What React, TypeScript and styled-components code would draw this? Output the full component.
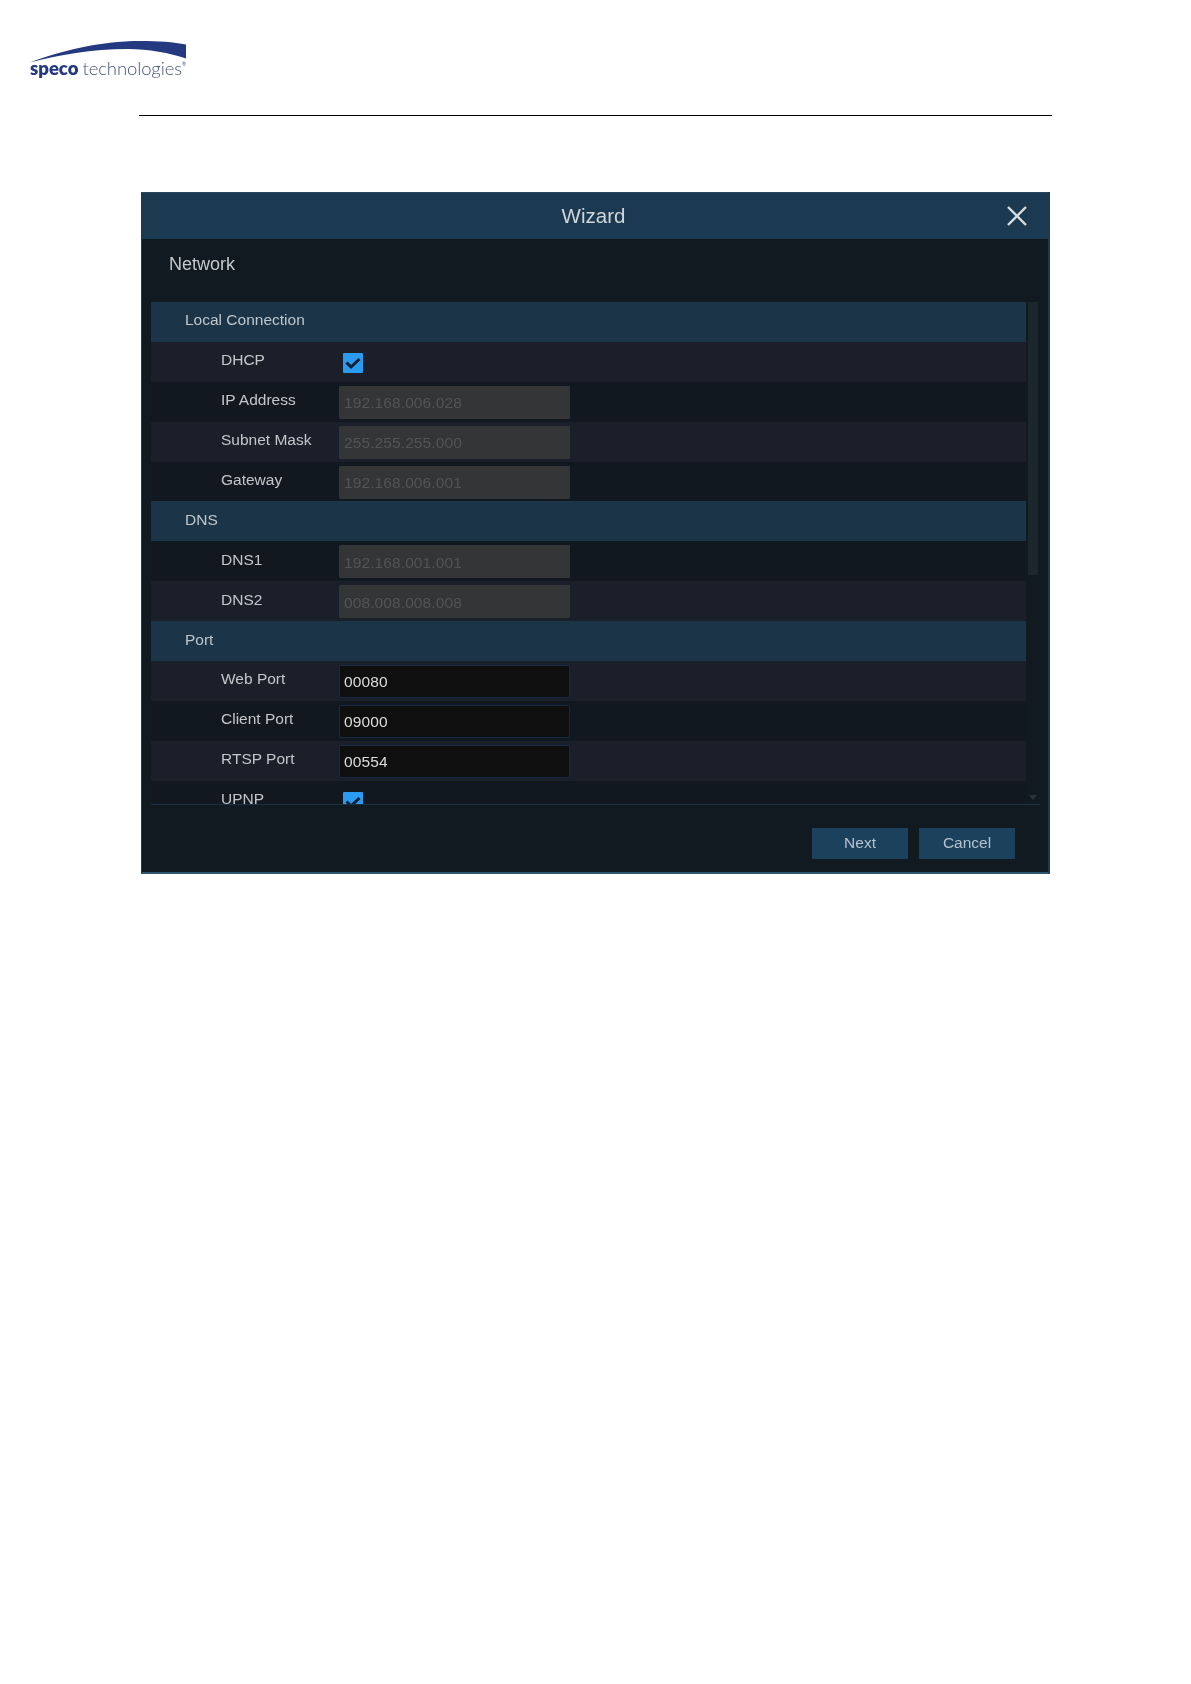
import React from "react";
import styled, { createGlobalStyle } from "styled-components";

const Global = createGlobalStyle`
  html, body { margin: 0; padding: 0; background: #fff; }
  body { font-family: "Liberation Sans", Arial, sans-serif; }
`;

const Page = styled.div`
  width: 1191px;
  height: 1684px;
  display: flex;
  flex-direction: column;
  overflow: hidden;
`;

const Logo = styled.div`
  margin: 41px 0 0 30px;
  width: 160px;
  height: 38px;
  display: flex;
  flex-direction: column;
  filter: blur(0.4px);
`;

const LogoArc = styled.svg`
  width: 157px;
  height: 23px;
  flex: none;
`;

const LogoWords = styled.div`
  display: flex;
  align-items: baseline;
  margin-top: -5px;
  line-height: 18px;
  font-family: "Lato", sans-serif;
  color: #46547f;
  white-space: nowrap;
`;

const LogoBold = styled.span`
  font-size: 18.5px;
  font-weight: 800;
  color: #24397f;
  margin-right: 4px;
`;

const LogoLight = styled.span`
  font-size: 18.5px;
  font-weight: 300;
  letter-spacing: -0.1px;
`;

const LogoMark = styled.span`
  font-size: 5px;
  line-height: 5px;
  align-self: flex-start;
  margin-top: 3px;
`;

const Rule = styled.hr`
  margin: 36px 0 0 139px;
  width: 913px;
  height: 1px;
  border: 0;
  background: #000;
  flex: none;
`;

const Window = styled.section`
  box-sizing: border-box;
  margin: 76px 0 0 141px;
  width: 909px;
  height: 682px;
  background: #121a21;
  border-left: 1px solid #1d3a50;
  border-right: 2px solid #1d3a50;
  border-bottom: 2px solid #31566f;
  display: flex;
  flex-direction: column;
  filter: blur(0.5px);
`;

const TitleBar = styled.header`
  position: relative;
  height: 47px;
  flex: none;
  background: #1b3a52;
  border-top: 1px solid #2b4a60;
  box-sizing: border-box;
  display: flex;
  align-items: center;
  justify-content: center;
  padding-right: 3px;
  font-size: 20.5px;
  color: #d0d5d8;
`;

const Close = styled.svg`
  position: absolute;
  right: 20px;
  top: 12px;
  width: 22px;
  height: 22px;
`;

const Heading = styled.h2`
  margin: 0;
  height: 63px;
  flex: none;
  box-sizing: border-box;
  padding: 15px 0 0 27px;
  font-size: 18px;
  line-height: 20px;
  font-weight: 400;
  color: #c4c9cc;
`;

const TableFrame = styled.div`
  margin-left: 9px;
  width: 889px;
  height: 503px;
  flex: none;
  display: flex;
  box-sizing: border-box;
  border-bottom: 1px solid #1b3145;
  overflow: hidden;
`;

const Rows = styled.div`
  width: 875px;
  flex: none;
  display: flex;
  flex-direction: column;
`;

const Section = styled.div`
  height: 39.9px;
  flex: none;
  box-sizing: border-box;
  background: #1b3448;
  padding: 0 0 3px 34px;
  display: flex;
  align-items: center;
  font-size: 15.5px;
  color: #c0c6ca;
`;

const Row = styled.div<{ $light?: boolean }>`
  height: 39.9px;
  flex: none;
  box-sizing: border-box;
  background: ${(p) => (p.$light ? "#1a1f2a" : "#11181f")};
  padding: 0 0 0 70px;
  display: flex;
  align-items: center;
`;

const Label = styled.span`
  width: 118px;
  flex: none;
  font-size: 15.5px;
  color: #c3c7cb;
  margin-top: -3px;
`;

const Field = styled.div<{ $disabled?: boolean }>`
  width: 231px;
  height: 33px;
  margin-top: 1px;
  box-sizing: border-box;
  padding: 2px 0 0 4px;
  display: flex;
  align-items: center;
  font-size: 15.5px;
  letter-spacing: 0.1px;
  background: ${(p) => (p.$disabled ? "#343537" : "#0f0f10")};
  color: ${(p) => (p.$disabled ? "#525355" : "#dcdcdc")};
  border: 1px solid ${(p) => (p.$disabled ? "#343537" : "#132b44")};
  border-radius: 1px;
`;

const Check = styled.svg`
  width: 20px;
  height: 20px;
  margin: 2px 0 0 4px;
  flex: none;
`;

const ScrollTrack = styled.div`
  width: 14px;
  flex: none;
  background: #121a21;
  position: relative;
`;

const ScrollThumb = styled.div`
  margin-left: 2px;
  width: 10px;
  height: 273px;
  background: #1c262d;
`;

const ScrollArrow = styled.div`
  position: absolute;
  left: 3px;
  bottom: 4px;
  width: 0;
  height: 0;
  border-left: 4px solid transparent;
  border-right: 4px solid transparent;
  border-top: 5px solid #26343d;
`;

const Footer = styled.footer`
  flex: 1;
  display: flex;
  justify-content: flex-end;
  gap: 11px;
  padding: 23px 33px 0 0;
`;

const Button = styled.button`
  width: 96px;
  height: 31px;
  border: 0;
  padding: 0 0 2px;
  background: #1c415d;
  color: #b4c2cc;
  font-family: "Liberation Sans", Arial, sans-serif;
  font-size: 15.5px;
`;

const CheckBox = () => (
  <Check viewBox="0 0 20 20">
    <rect width="20" height="20" rx="1" fill="#2b9bf2" />
    <path d="M3.5 9.5l4.5 4.5 8.5-8" fill="none" stroke="#0f2030" strokeWidth="3" />
  </Check>
);

type Item =
  | { kind: "section"; label: string }
  | { kind: "check"; label: string; light: boolean }
  | { kind: "field"; label: string; value: string; light: boolean; disabled: boolean };

const items: Item[] = [
  { kind: "section", label: "Local Connection" },
  { kind: "check", label: "DHCP", light: true },
  { kind: "field", label: "IP Address", value: "192.168.006.028", light: false, disabled: true },
  { kind: "field", label: "Subnet Mask", value: "255.255.255.000", light: true, disabled: true },
  { kind: "field", label: "Gateway", value: "192.168.006.001", light: false, disabled: true },
  { kind: "section", label: "DNS" },
  { kind: "field", label: "DNS1", value: "192.168.001.001", light: false, disabled: true },
  { kind: "field", label: "DNS2", value: "008.008.008.008", light: true, disabled: true },
  { kind: "section", label: "Port" },
  { kind: "field", label: "Web Port", value: "00080", light: true, disabled: false },
  { kind: "field", label: "Client Port", value: "09000", light: false, disabled: false },
  { kind: "field", label: "RTSP Port", value: "00554", light: true, disabled: false },
  { kind: "check", label: "UPNP", light: false },
];

export default function App() {
  return (
    <Page>
      <Global />
      <Logo>
        <LogoArc viewBox="0 0 157 23">
          <path d="M0 21.5C30 10 70 0 110 0C128 0 144 1 156 3.5V17.5C140 12 118 8 98 8C62 8 28 14 0 21.5Z" fill="#24397f" />
        </LogoArc>
        <LogoWords>
          <LogoBold>speco</LogoBold>
          <LogoLight>technologies</LogoLight>
          <LogoMark>®</LogoMark>
        </LogoWords>
      </Logo>
      <Rule />
      <Window>
        <TitleBar>
          Wizard
          <Close viewBox="0 0 22 22">
            <path d="M2 2L20 20M20 2L2 20" stroke="#d8dde0" strokeWidth="2.4" fill="none" />
          </Close>
        </TitleBar>
        <Heading>Network</Heading>
        <TableFrame>
          <Rows>
            {items.map((item) => {
              if (item.kind === "section") return <Section key={item.label}>{item.label}</Section>;
              return (
                <Row key={item.label} $light={item.light}>
                  <Label>{item.label}</Label>
                  {item.kind === "check" ? (
                    <CheckBox />
                  ) : (
                    <Field $disabled={item.disabled}>{item.value}</Field>
                  )}
                </Row>
              );
            })}
          </Rows>
          <ScrollTrack>
            <ScrollThumb />
            <ScrollArrow />
          </ScrollTrack>
        </TableFrame>
        <Footer>
          <Button>Next</Button>
          <Button>Cancel</Button>
        </Footer>
      </Window>
    </Page>
  );
}
